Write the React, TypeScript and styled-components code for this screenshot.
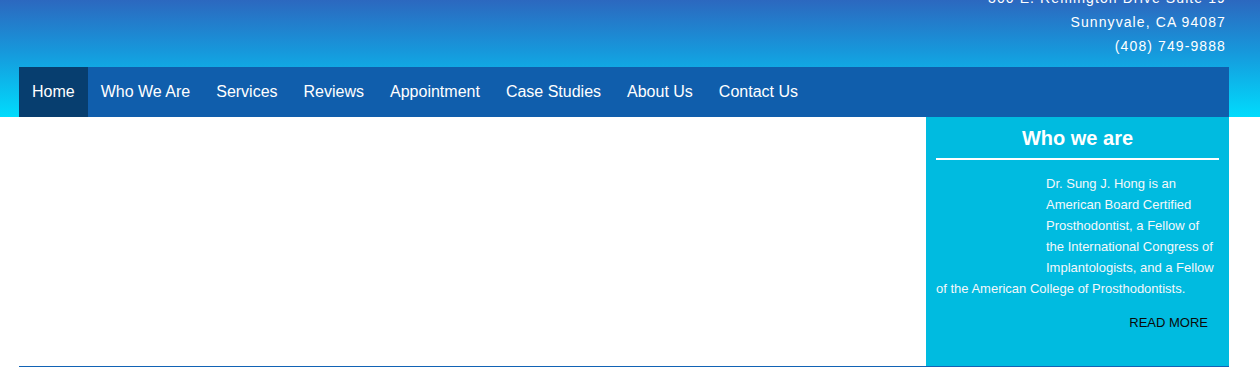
import React from 'react';
import styled, { createGlobalStyle } from 'styled-components';

const GlobalStyle = createGlobalStyle`
  html, body {
    margin: 0;
    padding: 0;
    background: #fff;
    font-family: Arial, "Liberation Sans", sans-serif;
    overflow: hidden;
  }
`;

const Header = styled.header`
  height: 117px;
  background: linear-gradient(to bottom, #2c68bf 0%, #1699dc 45%, #00dcfd 100%);
  overflow: hidden;
`;

const Inner = styled.div`
  width: 1210px;
  margin-left: 19px;
`;

const Address = styled.div`
  margin-top: -14px;
  height: 81px;
  padding-right: 3px;
  text-align: right;
  color: #fff;
  font-size: 14px;
  line-height: 24px;
  letter-spacing: 1.1px;
`;

const Nav = styled.nav`
  display: flex;
  height: 50px;
  background: #105eac;
`;

const NavItem = styled.a<{ $active?: boolean }>`
  display: flex;
  align-items: center;
  padding: 0 13px;
  color: #fff;
  font-size: 16px;
  text-decoration: none;
  background: ${(p) => (p.$active ? '#073e6f' : 'transparent')};
`;

const Body = styled.div`
  display: flex;
  width: 1210px;
  margin-left: 19px;
  height: 249px;
  border-bottom: 1px solid #1263b5;
`;

const Main = styled.main`
  flex: 1;
  background: #fff;
`;

const Sidebar = styled.aside`
  width: 283px;
  padding: 0 10px;
  background: #00bbe0;
  color: #fff;
`;

const Title = styled.h2`
  margin: 0;
  padding: 9px 0 8px;
  text-align: center;
  font-size: 20px;
  line-height: 24px;
  font-weight: bold;
  border-bottom: 2px solid #fff;
`;

const Text = styled.p`
  margin: 13px 0 0;
  font-size: 13px;
  line-height: 21.1px;
  color: #f4f8fb;
`;

const Photo = styled.span`
  float: left;
  width: 110px;
  height: 105px;
`;

const ReadMore = styled.a`
  display: block;
  margin-top: 15px;
  padding-right: 11px;
  text-align: right;
  color: #0a0a0a;
  font-size: 13px;
  text-decoration: none;
`;

const links = ['Home', 'Who We Are', 'Services', 'Reviews', 'Appointment', 'Case Studies', 'About Us', 'Contact Us'];

export default function App() {
  return (
    <>
      <GlobalStyle />
      <Header>
        <Inner>
          <Address>
            <div>300 E. Remington Drive Suite 19</div>
            <div>Sunnyvale, CA 94087</div>
            <div>(408) 749-9888</div>
          </Address>
          <Nav>
            {links.map((l, i) => (
              <NavItem key={l} href="#" $active={i === 0}>
                {l}
              </NavItem>
            ))}
          </Nav>
        </Inner>
      </Header>
      <Body>
        <Main />
        <Sidebar>
          <Title>Who we are</Title>
          <Text>
            <Photo />
            Dr. Sung J. Hong is an American Board Certified Prosthodontist, a Fellow of the International Congress of
            Implantologists, and a Fellow of the American College of Prosthodontists.
          </Text>
          <ReadMore href="#">READ MORE</ReadMore>
        </Sidebar>
      </Body>
    </>
  );
}
